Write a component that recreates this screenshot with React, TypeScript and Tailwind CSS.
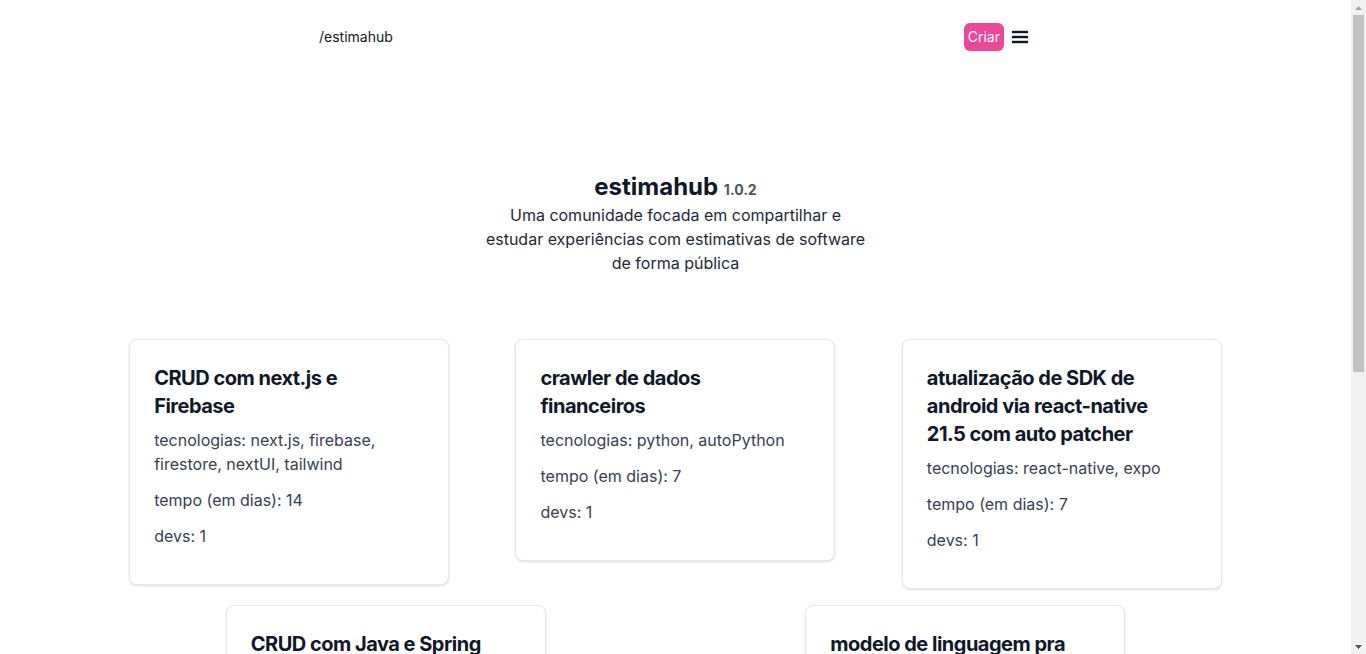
import React from 'react';

interface Estimate {
  title: string;
  techs: string;
  days: number;
  devs: number;
}

const estimates: Estimate[] = [
  {
    title: 'CRUD com next.js e Firebase',
    techs: 'next.js, firebase, firestore, nextUI, tailwind',
    days: 14,
    devs: 1
  },
  {
    title: 'crawler de dados financeiros',
    techs: 'python, autoPython',
    days: 7,
    devs: 1
  },
  {
    title: 'atualização de SDK de android via react-native 21.5 com auto patcher',
    techs: 'react-native, expo',
    days: 7,
    devs: 1
  },
  {
    title: 'CRUD com Java e Spring',
    techs: 'java, spring, postgres',
    days: 10,
    devs: 2
  },
  {
    title: 'modelo de linguagem pra classificar tickets',
    techs: 'python, pytorch, huggingface',
    days: 30,
    devs: 3
  }
];

const MenuIcon = () => (
  <svg width="18" height="18" viewBox="0 0 18 18" fill="none" stroke="currentColor" strokeWidth="2.4">
    <line x1="0" y1="4" x2="16" y2="4" />
    <line x1="0" y1="9" x2="16" y2="9" />
    <line x1="0" y1="14" x2="16" y2="14" />
  </svg>
);

// fake classic scrollbar, the reference was taken with one
const Scrollbar = () => (
  <div className="h-screen w-[15px] shrink-0 bg-[#f1f1f1] flex flex-col">
    <div className="h-[15px] flex items-center justify-center">
      <svg width="7" height="4" viewBox="0 0 7 4">
        <polygon points="3.5,0 7,4 0,4" fill="#a3a3a3" />
      </svg>
    </div>
    <div className="h-[357px] mx-[2px] bg-[#c1c1c1]" />
    <div className="flex-1" />
    <div className="h-[15px] flex items-center justify-center">
      <svg width="7" height="4" viewBox="0 0 7 4">
        <polygon points="0,0 7,0 3.5,4" fill="#505050" />
      </svg>
    </div>
  </div>
);

const EstimateCard = ({ item }: { item: Estimate }) => (
  <div className="w-80 bg-white border border-gray-200 rounded-lg shadow p-6">
    <div className="w-64">
      <h2 className="text-xl font-bold tracking-tight text-gray-900 mb-2">{item.title}</h2>
      <p className="text-base text-gray-700 mb-3">tecnologias: {item.techs}</p>
      <p className="text-base text-gray-700 mb-3">tempo (em dias): {item.days}</p>
      <p className="text-base text-gray-700 mb-3">devs: {item.devs}</p>
    </div>
  </div>
);

const App = () => {
  return (
    <div className="flex items-start bg-white font-['Inter',sans-serif]">
      <div className="w-[1351px] shrink-0 pb-[250px]">
        <header className="h-[74px] w-[713px] mx-auto flex items-center justify-between">
          <span className="text-sm text-gray-900">/estimahub</span>
          <div className="flex items-center gap-2">
            <button className="bg-[#ec4899] text-white text-sm leading-5 px-1 py-1 rounded-md">
              Criar
            </button>
            <span className="text-gray-900 w-5 flex items-center">
              <MenuIcon />
            </span>
          </div>
        </header>

        <section className="pt-[97px] flex flex-col items-center text-center">
          <h1 className="text-2xl font-bold text-gray-900">
            estimahub <span className="text-sm font-bold text-gray-600">1.0.2</span>
          </h1>
          <p className="max-w-sm text-base text-gray-800">
            Uma comunidade focada em compartilhar e estudar experiências com estimativas de software de forma pública
          </p>
        </section>

        <main className="mt-16 px-24 flex flex-wrap justify-around items-start gap-y-4">
          {estimates.map((item) => (
            <EstimateCard key={item.title} item={item} />
          ))}
        </main>
      </div>
      <Scrollbar />
    </div>
  );
};

export default App;
